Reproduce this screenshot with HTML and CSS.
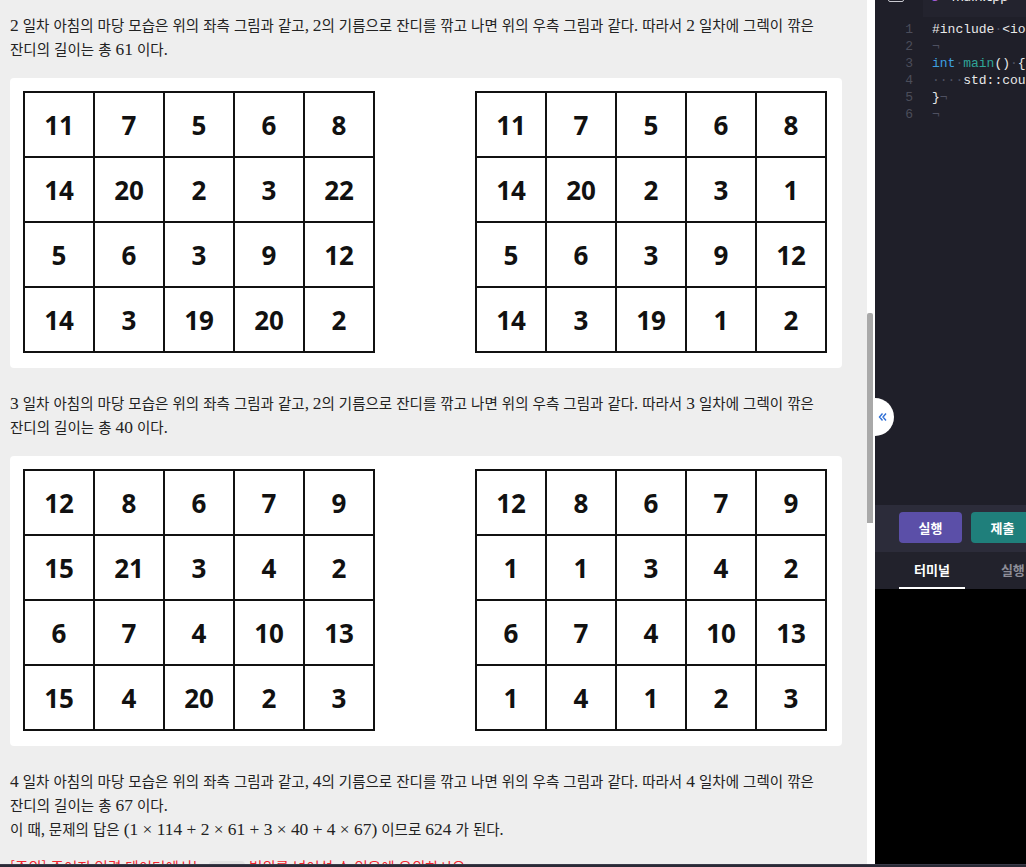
FILE: index.html
```html
<!DOCTYPE html>
<html lang="ko">
<head>
<meta charset="utf-8">
<title>문제</title>
<link rel="stylesheet" href="styles.css">
</head>
<body>
<div class="app">
  <main class="problem">
    <div class="content">
      <p class="para"><span class="m">2</span> 일차 아침의 마당 모습은 위의 좌측 그림과 같고, <span class="m">2</span>의 기름으로 잔디를 깎고 나면 위의 우측 그림과 같다. 따라서 <span class="m">2</span> 일차에 그렉이 깎은 잔디의 길이는 총 <span class="m">61</span> 이다.</p>
      <div class="card">
        <div class="grid">
          <span>11</span><span>7</span><span>5</span><span>6</span><span>8</span>
          <span>14</span><span>20</span><span>2</span><span>3</span><span>22</span>
          <span>5</span><span>6</span><span>3</span><span>9</span><span>12</span>
          <span>14</span><span>3</span><span>19</span><span>20</span><span>2</span>
        </div>
        <div class="grid">
          <span>11</span><span>7</span><span>5</span><span>6</span><span>8</span>
          <span>14</span><span>20</span><span>2</span><span>3</span><span>1</span>
          <span>5</span><span>6</span><span>3</span><span>9</span><span>12</span>
          <span>14</span><span>3</span><span>19</span><span>1</span><span>2</span>
        </div>
      </div>
      <p class="para"><span class="m">3</span> 일차 아침의 마당 모습은 위의 좌측 그림과 같고, <span class="m">2</span>의 기름으로 잔디를 깎고 나면 위의 우측 그림과 같다. 따라서 <span class="m">3</span> 일차에 그렉이 깎은 잔디의 길이는 총 <span class="m">40</span> 이다.</p>
      <div class="card">
        <div class="grid">
          <span>12</span><span>8</span><span>6</span><span>7</span><span>9</span>
          <span>15</span><span>21</span><span>3</span><span>4</span><span>2</span>
          <span>6</span><span>7</span><span>4</span><span>10</span><span>13</span>
          <span>15</span><span>4</span><span>20</span><span>2</span><span>3</span>
        </div>
        <div class="grid">
          <span>12</span><span>8</span><span>6</span><span>7</span><span>9</span>
          <span>1</span><span>1</span><span>3</span><span>4</span><span>2</span>
          <span>6</span><span>7</span><span>4</span><span>10</span><span>13</span>
          <span>1</span><span>4</span><span>1</span><span>2</span><span>3</span>
        </div>
      </div>
      <p class="para"><span class="m">4</span> 일차 아침의 마당 모습은 위의 좌측 그림과 같고, <span class="m">4</span>의 기름으로 잔디를 깎고 나면 위의 우측 그림과 같다. 따라서 <span class="m">4</span> 일차에 그렉이 깎은 잔디의 길이는 총 <span class="m">67</span> 이다.<br>이 때, 문제의 답은 <span class="m">(1<span class="op">×</span>114<span class="op">+</span>2<span class="op">×</span>61<span class="op">+</span>3<span class="op">×</span>40<span class="op">+</span>4<span class="op">×</span>67)</span> 이므로 <span class="m">624</span> 가 된다.</p>
      <p class="para warn">[주의] 주어진 입력 데이터에서는 <code class="code">int</code> 범위를 넘어설 수 있음에 유의하시오.</p>
    </div>
  </main>
  <div class="scrolltrack"><div class="thumb"></div></div>
  <aside class="ide">
    <button class="collapse" type="button" aria-label="접기">
      <svg width="9" height="10" viewBox="0 0 9 10"><path d="M4.5 1.5 1.5 5 4.5 8.5M8 1.5 5 5 8 8.5" fill="none" stroke="#2f6fd6" stroke-width="1.4"/></svg>
    </button>
    <div class="tabbar">
      <div class="sidebtn"><span class="sideicon"></span></div>
      <div class="filetab"><span class="cicon">c</span><span class="fname">main.cpp</span></div>
    </div>
    <div class="editor">
      <div class="line"><span class="ln">1</span><span class="code-txt">#include<span class="ws">·</span>&lt;iostream&gt;</span></div>
      <div class="line"><span class="ln">2</span><span class="code-txt"><span class="ws">¬</span></span></div>
      <div class="line"><span class="ln">3</span><span class="code-txt"><span class="kw">int</span><span class="ws">·</span><span class="fn">main</span>()<span class="ws">·</span>{</span></div>
      <div class="line"><span class="ln">4</span><span class="code-txt"><span class="ws">····</span>std::cout</span></div>
      <div class="line"><span class="ln">5</span><span class="code-txt">}<span class="ws">¬</span></span></div>
      <div class="line"><span class="ln">6</span><span class="code-txt"><span class="ws">¬</span></span></div>
    </div>
    <div class="actions">
      <button class="btn run" type="button">실행</button>
      <button class="btn submit" type="button">제출</button>
    </div>
    <div class="termtabs">
      <span class="ttab active">터미널</span>
      <span class="ttab">실행 결과</span>
    </div>
    <div class="terminal"></div>
  </aside>
</div>
<div class="statusbar"></div>
</body>
</html>
```

FILE: styles.css
```css
* { box-sizing: border-box; }
html, body { margin: 0; padding: 0; overflow: hidden; }
body {
  width: 1026px;
  height: 867px;
  background: #eeeeee;
  font-family: "Noto Sans CJK KR", "Noto Sans", sans-serif;
}
.app {
  display: flex;
  height: 864px;
}
.problem {
  width: 867px;
  flex: none;
  background: #eeeeee;
  overflow: hidden;
}
.content {
  padding: 13px 25px 0 10px;
}
.para {
  margin: 0;
  font-size: 14.5px;
  line-height: 24px;
  color: #222;
  word-break: keep-all;
}
.m {
  font-family: "Liberation Serif", "DejaVu Serif", serif;
  font-size: 1.2em;
}
.op { margin: 0 0.25em; }
.warn {
  margin-top: 14px;
  color: #f0262f;
}
.code {
  display: inline-block;
  background: #e2e2e2;
  color: #e2e2e2;
  border-radius: 4px;
  padding: 0 6px;
  font-family: "Liberation Mono", monospace;
  font-size: 13px;
  line-height: 18px;
}
.card {
  background: #fff;
  border-radius: 4px;
  margin: 17px 0 23px;
  padding: 13px 15px 15px 13px;
  display: flex;
  justify-content: space-between;
}
.grid {
  display: grid;
  grid-template-columns: repeat(5, 68px);
  grid-template-rows: repeat(4, 63px);
  gap: 2px;
  padding: 2px;
  background: #111;
}
.grid span {
  background: #fff;
  display: flex;
  align-items: center;
  justify-content: center;
  font-family: "Noto Sans", "Open Sans", sans-serif;
  font-weight: 700;
  font-size: 26px;
  color: #111;
}
.scrolltrack {
  width: 8px;
  flex: none;
  background: #fff;
}
.thumb {
  margin-top: 313px;
  width: 6px;
  height: 210px;
  background: #a9a9a9;
  border-radius: 2px 2px 0 0;
}
.ide {
  flex: 1;
  position: relative;
  display: flex;
  flex-direction: column;
  background: #1f1f29;
  color: #e6e6e6;
}
.collapse {
  position: absolute;
  left: 0;
  top: 398px;
  width: 19px;
  height: 38px;
  border: 0;
  padding: 0 0 0 3px;
  background: #fff;
  border-radius: 0 19px 19px 0;
  display: flex;
  align-items: center;
  cursor: pointer;
}
.tabbar {
  display: flex;
  height: 30px;
  margin-top: -13px;
  flex: none;
}
.sidebtn {
  width: 48px;
  display: flex;
  align-items: flex-end;
  justify-content: center;
  padding-bottom: 15px;
  padding-right: 6px;
}
.sideicon {
  width: 16px;
  height: 10px;
  border: 1.5px solid #c9c9d0;
  border-radius: 2px;
}
.filetab {
  flex: 1;
  background: #23232e;
  display: flex;
  align-items: flex-end;
  padding: 0 0 14px 8px;
  gap: 14px;
  font-size: 13px;
  line-height: 14px;
}
.cicon { color: #a35bd6; font-weight: 700; font-family: "Noto Sans", sans-serif; }
.fname { color: #f0f0f0; font-family: "Noto Sans", sans-serif; }
.editor {
  flex: 1;
  padding-top: 4px;
  font-family: "Liberation Mono", "DejaVu Sans Mono", monospace;
  font-size: 13px;
  line-height: 17px;
}
.line { display: flex; white-space: pre; }
.ln {
  width: 38px;
  text-align: right;
  color: #4b4d5a;
  flex: none;
}
.code-txt { margin-left: 19px; color: #e8e8e8; }
.ws { color: #4e5060; }
.kw { color: #3d9fe0; }
.fn { color: #2fa598; }
.actions {
  flex: none;
  height: 47px;
  background: #2c2c3a;
  display: flex;
  gap: 9px;
  padding: 7px 0 0 24px;
}
.btn {
  flex: none;
  width: 63px;
  height: 31px;
  border: 0;
  border-radius: 4px;
  color: #fff;
  font-family: "Noto Sans CJK KR", sans-serif;
  font-weight: 700;
  font-size: 13px;
}
.run { background: #5b4fa8; }
.submit { background: #1f7f7b; }
.termtabs {
  flex: none;
  height: 37px;
  background: #22222c;
  display: flex;
  gap: 21px;
  padding-left: 24px;
  white-space: nowrap;
}
.ttab {
  padding: 0 15px;
  display: flex;
  align-items: center;
  font-size: 13px;
  font-weight: 700;
  color: #8d8d97;
  border-bottom: 2px solid transparent;
}
.ttab.active {
  color: #fff;
  border-bottom-color: #fff;
}
.terminal {
  flex: none;
  height: 275px;
  background: #000;
}
.statusbar {
  height: 3px;
  background: #2a2a36;
  border-top: 1px solid #3a3a48;
}
```
